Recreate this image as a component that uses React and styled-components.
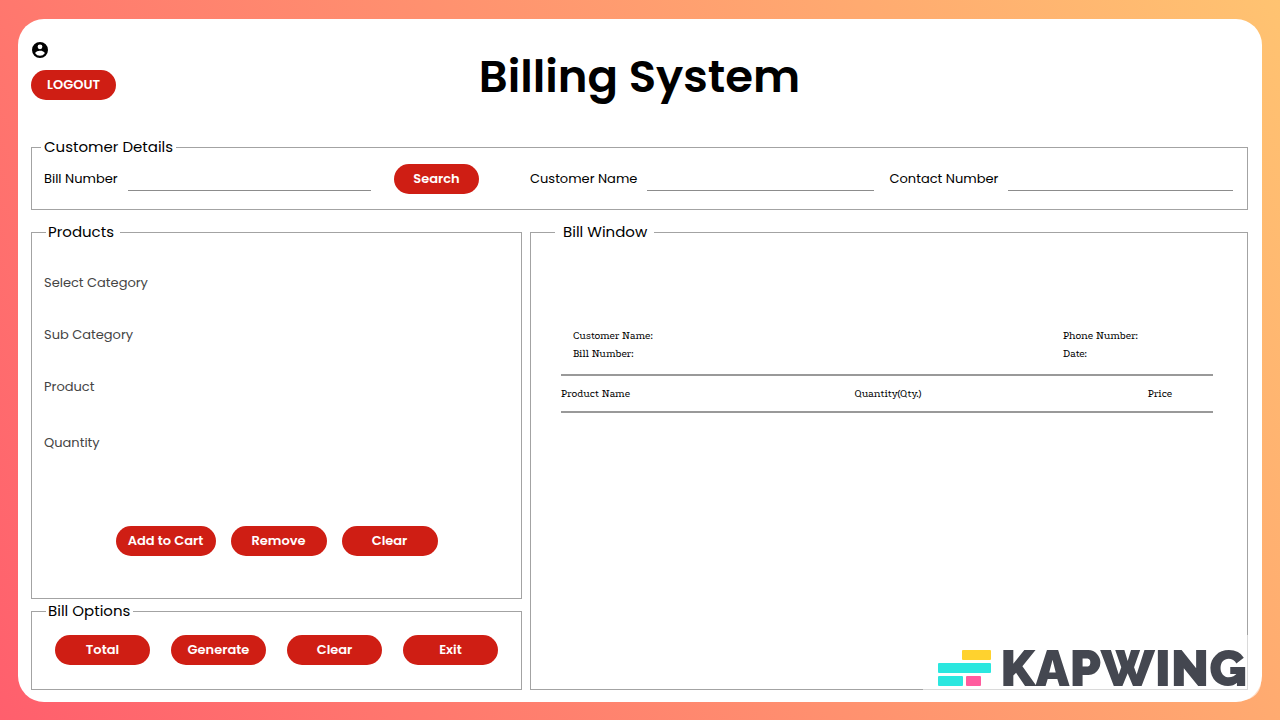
import React from "react";
import styled, { createGlobalStyle } from "styled-components";

const GlobalStyle = createGlobalStyle`
  *, *::before, *::after { box-sizing: border-box; }
  body {
    margin: 0;
    font-family: Poppins, Inter, sans-serif;
    color: #000;
  }
  button, input, select { font: inherit; color: inherit; }
`;

const Page = styled.div`
  position: relative;
  display: flex;
  min-height: 100vh;
  padding: 19px 18px 18px;
  background: linear-gradient(60deg, #ff5f6d, #ffc371);
`;

const Card = styled.main`
  flex: 1;
  display: flex;
  flex-direction: column;
  padding: 0 14px 12px 13px;
  border-radius: 26px;
  background: #fff;
`;

const Header = styled.header`
  display: grid;
  grid-template-columns: 1fr auto 1fr;
  min-height: 118px;
`;

const Account = styled.div`
  display: flex;
  flex-direction: column;
  align-items: flex-start;
  gap: 12px;
  padding-top: 23px;
`;

const AccountIcon = styled.svg`
  display: block;
  width: 18px;
  height: 16px;
`;

const Title = styled.h1`
  margin: 0;
  padding-top: 30px;
  font-size: 45px;
  line-height: 56px;
  font-weight: 600;
`;

const Button = styled.button`
  width: ${(p) => p.$width}px;
  height: 30px;
  padding: 0;
  border: 0;
  border-radius: 15px;
  background: #cf1e14;
  color: #fff;
  font-size: 13px;
  font-weight: 600;
  cursor: pointer;
`;

const Panel = styled.fieldset`
  min-width: 0;
  margin: 0;
  padding: 0;
  border: 1px solid #a3a3a3;
  flex: ${(p) => (p.$grow ? 1 : "none")};
`;

const Legend = styled.legend`
  margin-left: ${(p) => p.$indent}px;
  padding: 0 ${(p) => p.$after}px 0 ${(p) => p.$before}px;
  font-size: 15px;
  line-height: 20px;
`;

const CustomerRow = styled.div`
  display: grid;
  grid-template-columns: minmax(0, 435fr) minmax(0, 703fr);
  column-gap: 51px;
  padding: 7px 14px 15px 12px;
`;

const SearchGroup = styled.div`
  display: flex;
  gap: 23px;
`;

const ContactGroup = styled.div`
  display: grid;
  grid-template-columns: 1fr 1fr;
  column-gap: 16px;
`;

const Field = styled.div`
  flex: 1;
  display: flex;
  gap: 10px;
  height: 27px;
  min-width: 0;
`;

const FieldLabel = styled.label`
  flex: none;
  font-size: 13px;
  line-height: 30px;
  white-space: nowrap;
`;

const LineInput = styled.input`
  flex: 1;
  min-width: 0;
  padding: 0;
  border: 0;
  border-bottom: 1px solid #8c8c8c;
  background: transparent;
  font-size: 13px;
  outline: none;
`;

const Columns = styled.div`
  flex: 1;
  display: grid;
  grid-template-columns: 491fr 718fr;
  gap: 8px;
  margin-top: 12px;
`;

const Side = styled.div`
  display: flex;
  flex-direction: column;
  gap: 2px;
`;

const ProductForm = styled.div`
  display: grid;
  grid-template-rows: 52px 52px 52px 60px;
  padding: 15px 12px 0;
`;

const ProductRow = styled.div`
  display: grid;
  grid-template-columns: 140px 1fr;
  align-items: center;
  color: #444;
  font-size: 13px;
`;

const PlainSelect = styled.select`
  appearance: none;
  height: 30px;
  border: 0;
  background: transparent;
`;

const PlainInput = styled.input`
  height: 30px;
  border: 0;
  background: transparent;
`;

const Actions = styled.div`
  display: flex;
  justify-content: center;
  gap: ${(p) => p.$gap}px;
  padding: ${(p) => p.$top}px 0 24px;
`;

const Bill = styled.div`
  padding: 85px 34px 0 30px;
  font-family: Podkova, "DejaVu Serif", serif;
  font-size: 11px;
  line-height: 18px;
`;

const BillInfo = styled.div`
  display: grid;
  grid-template-columns: 490fr 150fr;
  padding-left: 12px;
`;

const BillTable = styled.table`
  width: 100%;
  margin-top: 11px;
  border-collapse: separate;
  border-spacing: 0;
  border-top: 2px solid #999;
  border-bottom: 2px solid #999;
  table-layout: fixed;
`;

const BillHead = styled.th`
  width: ${(p) => p.$width};
  height: 35px;
  padding: 0;
  font-weight: 400;
  text-align: left;
`;

const Watermark = styled.div`
  position: absolute;
  right: 19px;
  bottom: 20px;
  display: flex;
  align-items: center;
  gap: 9px;
  height: 65px;
  padding: 0 14px 0 15px;
  border-bottom-right-radius: 18px;
  background: rgba(255, 255, 255, 0.6);
`;

const WatermarkBars = styled.svg`
  display: block;
  width: 53px;
  height: 36px;
`;

const WatermarkName = styled.span`
  color: #444750;
  font-family: Raleway, Lato, sans-serif;
  font-size: 51px;
  line-height: 60px;
  font-weight: 900;
`;

const productFields = ["Select Category", "Sub Category", "Product"];

function LineField({ id, label }) {
  return (
    <Field>
      <FieldLabel htmlFor={id}>{label}</FieldLabel>
      <LineInput id={id} type="text" />
    </Field>
  );
}

export default function App() {
  return (
    <>
      <GlobalStyle />
      <Page>
        <Card>
          <Header>
            <Account>
              <AccountIcon viewBox="1 2 22 20" aria-hidden="true">
                <path
                  fillRule="evenodd"
                  d="M12 2a10 10 0 1 0 0 20 10 10 0 0 0 0-20zm0 3a3 3 0 1 1 0 6 3 3 0 0 1 0-6zm0 14.200a7.200 7.200 0 0 1-6-3.220c.030-1.990 4-3.080 6-3.080s5.970 1.090 6 3.080a7.200 7.200 0 0 1-6 3.220z"
                />
              </AccountIcon>
              <Button type="button" $width={85}>LOGOUT</Button>
            </Account>
            <Title>Billing System</Title>
          </Header>

          <Panel>
            <Legend $indent={9} $before={3} $after={3}>Customer Details</Legend>
            <CustomerRow>
              <SearchGroup>
                <LineField id="bill-number" label="Bill Number" />
                <Button type="button" $width={85}>Search</Button>
              </SearchGroup>
              <ContactGroup>
                <LineField id="customer-name" label="Customer Name" />
                <LineField id="contact-number" label="Contact Number" />
              </ContactGroup>
            </CustomerRow>
          </Panel>

          <Columns>
            <Side>
              <Panel $grow>
                <Legend $indent={14} $before={2} $after={6}>Products</Legend>
                <ProductForm>
                  {productFields.map((name) => (
                    <ProductRow key={name}>
                      <label htmlFor={name}>{name}</label>
                      <PlainSelect id={name} />
                    </ProductRow>
                  ))}
                  <ProductRow>
                    <label htmlFor="quantity">Quantity</label>
                    <PlainInput id="quantity" type="text" />
                  </ProductRow>
                </ProductForm>
                <Actions $gap={15} $top={53}>
                  <Button type="button" $width={100}>Add to Cart</Button>
                  <Button type="button" $width={96}>Remove</Button>
                  <Button type="button" $width={96}>Clear</Button>
                </Actions>
              </Panel>
              <Panel>
                <Legend $indent={14} $before={2} $after={3}>Bill Options</Legend>
                <Actions $gap={21} $top={14}>
                  {["Total", "Generate", "Clear", "Exit"].map((name) => (
                    <Button type="button" key={name} $width={95}>{name}</Button>
                  ))}
                </Actions>
              </Panel>
            </Side>

            <Panel>
              <Legend $indent={24} $before={8} $after={7}>Bill Window</Legend>
              <Bill>
                <BillInfo>
                  <span>Customer Name:</span>
                  <span>Phone Number:</span>
                  <span>Bill Number:</span>
                  <span>Date:</span>
                </BillInfo>
                <BillTable>
                  <thead>
                    <tr>
                      <BillHead scope="col" $width="45%">Product Name</BillHead>
                      <BillHead scope="col" $width="45%">Quantity(Qty.)</BillHead>
                      <BillHead scope="col" $width="10%">Price</BillHead>
                    </tr>
                  </thead>
                </BillTable>
              </Bill>
            </Panel>
          </Columns>
        </Card>

        <Watermark>
          <WatermarkBars viewBox="0 0 53 36" aria-hidden="true">
            <rect x="24" y="0" width="29" height="10" rx="1" fill="#ffd22e" />
            <rect x="0" y="13" width="53" height="10" rx="1" fill="#2be7df" />
            <rect x="0" y="26" width="25" height="10" rx="1" fill="#2be7df" />
            <rect x="28" y="26" width="15" height="10" rx="1" fill="#ff5c9e" />
          </WatermarkBars>
          <WatermarkName>KAPWING</WatermarkName>
        </Watermark>
      </Page>
    </>
  );
}
